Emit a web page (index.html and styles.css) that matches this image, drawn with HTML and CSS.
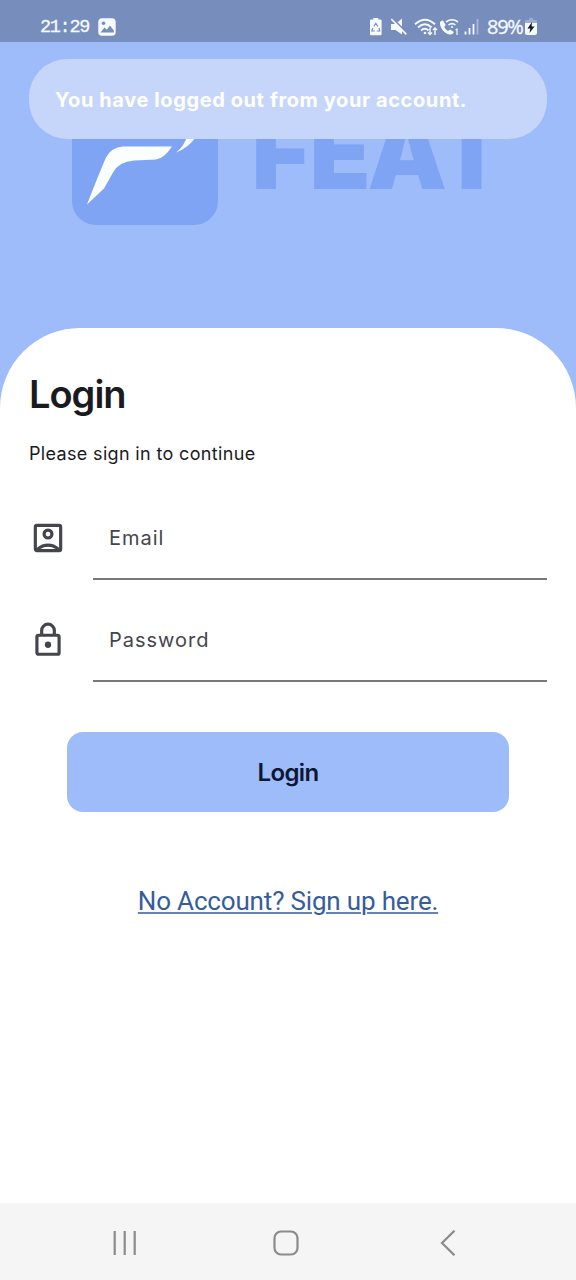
FILE: index.html
```html
<!DOCTYPE html>
<html lang="en">
<head>
<meta charset="utf-8">
<title>Login</title>
<link rel="stylesheet" href="styles.css">
</head>
<body>
<div class="screen">
  <div class="status">
    <span class="time">21:29</span>
    <svg class="gallery" width="18" height="18" viewBox="0 0 18 18"><rect x=".3" y=".3" width="17.4" height="17.4" rx="3.8" fill="#f5faff"/><circle cx="5.5" cy="5.3" r="1.8" fill="#778dbc"/><path d="M2.5 14.500 6.500 9.500l2.300 2.200L12 7.500l3.800 5v2z" fill="#778dbc"/></svg>
    <svg class="indicators" width="115" height="20" viewBox="0 0 115 20" fill="none" stroke="#f5faff">
      <path d="M2 2.500h2.300V1h5v1.500h2.300q1 0 1 1v13.700q0 1-1 1H2q-1 0-1-1V3.500q0-1 1-1z" fill="#f5faff" stroke="none"/>
      <path d="m4.800 9.500 2-3.200 2 3.200M10 11l.8 3H7.800M5.800 14H2.800l1-3" stroke="#778dbc" stroke-width="1.100"/>
      <path d="M22 7h4.500L33 1.500v16L26.500 13H22z" fill="#f5faff" stroke="none"/>
      <path d="m23.500 1.500 15 15" stroke="#778dbc" stroke-width="1.800"/><path d="m22.300 2 15 15.300" stroke-width="1.700"/>
      <path d="M46 7.300Q56-2 66 7.300M49 10.500q7-6.300 13.500 0M52 13.500q4-3.500 7.500 0" stroke-width="1.900"/>
      <circle cx="56" cy="16" r="1.300" fill="#f5faff" stroke="none"/>
      <path d="M61 11v6.500m-2-2 2 2 2-2M66 18v-7m-2 2 2-2 2 2" stroke-width="1.400"/>
      <path d="M74 3.500c-2 0-3.500 1.500-3 4 1 5 5 9 9.500 10 2.500.5 4-1 4.300-2.500L81 12.500l-2 1.500q-2.500-1.200-3.800-4l1.500-2z" fill="#f5faff" stroke="none"/>
      <path d="M77 5q6-4.500 12 0M79.500 8q3.500-2.800 7 0" stroke-width="1.600"/><circle cx="83" cy="10" r="1.100" fill="#f5faff" stroke="none"/>
      <path d="m86.500 13 1.500-1v6" stroke-width="1.200"/>
      <path d="M96.500 14.500v3M100.500 11v6.500M104.500 7v10.500" stroke-width="1.800"/><path d="M108.500 2v15.500" stroke-width="1.800" opacity=".4"/>
    </svg>
    <span class="percent">89%</span>
    <svg class="battery" width="12" height="18" viewBox="0 0 12 18"><path d="M4 0h4v2h3q1 0 1 1v3H0V3q0-1 1-1h3z" fill="#9bacd0"/><path d="M0 5h12v10q0 2-2 2H2q-2 0-2-2z" fill="#f5faff"/><path d="M7 4 2.500 10.500H5.300L4.500 15 9.500 8.500H6.600z" fill="#15191f"/></svg>
  </div>
  <div class="hero">
    <svg class="logo" width="440" height="146" viewBox="72 78.500 440 146">
      <rect x="72" y="78.500" width="146" height="146" rx="24" fill="#7fa4f4"/>
      <path d="M87 204C94 186 100 171 106 157Q111 147 123 146H172Q164 158 156 159L134 160Q119 161 113 172L104 188Z" fill="#fafffe"/>
      <path d="M176 152Q184 146 187 136H196Q189 147 176 152Z" fill="#fafffe"/>
      <text class="brand" y="188"><tspan x="251.500">F</tspan><tspan x="309.500">E</tspan><tspan x="367.500">A</tspan><tspan x="437.300">T</tspan></text>
    </svg>
    <div class="toast">You have logged out from your account.</div>
  </div>
  <main class="sheet">
    <h1 class="title">Login</h1>
    <p class="subtitle">Please sign in to continue</p>
    <div class="row">
      <svg class="icon" width="38" height="38" viewBox="0 0 24 24" fill="#45464d"><path d="M19 3H5a2 2 0 0 0-2 2v14c0 1.100.9 2 2 2h14a2 2 0 0 0 2-2V5a2 2 0 0 0-2-2zM7.200 19a8.300 8.300 0 0 1 9.600 0zM19 18.200a10.400 10.400 0 0 0-14 0V5h14zM12 13a3.500 3.500 0 1 0 0-7 3.500 3.500 0 0 0 0 7zm0-5a1.500 1.500 0 1 1 0 3 1.500 1.500 0 0 1 0-3z"/></svg>
      <label class="field">Email</label>
    </div>
    <div class="row">
      <svg class="icon" width="38" height="38" viewBox="0 0 24 24" fill="#45464d"><path d="M18 8h-1V6A5 5 0 0 0 7 6v2H6a2 2 0 0 0-2 2v10c0 1.100.9 2 2 2h12a2 2 0 0 0 2-2V10a2 2 0 0 0-2-2zM9 6a3 3 0 0 1 6 0v2H9zm9 14H6V10h12zm-6-3a2 2 0 1 0 0-4 2 2 0 0 0 0 4z"/></svg>
      <label class="field">Password</label>
    </div>
    <button class="submit">Login</button>
    <a class="signup">No Account? Sign up here.</a>
  </main>
  <nav class="nav">
    <svg width="24" height="26" viewBox="0 0 24 26" fill="none" stroke="#8b8b8b" stroke-width="2.200"><path d="M1.700 1v24M11.700 1v24M21.700 1v24"/></svg>
    <svg width="26" height="26" viewBox="0 0 26 26" fill="none" stroke="#8b8b8b" stroke-width="2.200"><rect x="1.500" y="1.500" width="23" height="23" rx="6.500"/></svg>
    <svg class="back" width="16" height="26" viewBox="0 0 16 26" fill="none" stroke="#8b8b8b" stroke-width="2.200"><path d="M14.500.7 2 13l12.500 12.300"/></svg>
  </nav>
</div>
</body>
</html>
```
FILE: styles.css
```css
* { box-sizing: border-box; }
body { margin: 0; font-family: Inter, sans-serif; }
.screen { width: 576px; height: 1280px; display: flex; flex-direction: column; background: #9ebbfa; }
.status { height: 42px; flex: none; background: #778dbc; display: flex; align-items: center; padding: 11px 39px 0 40px; color: #f5faff; font-size: 18px; }
.time { width: 58px; padding-top: 2px; font-family: "Liberation Mono", monospace; font-size: 18.500px; letter-spacing: -1.300px; -webkit-text-stroke: .3px #f5faff; }
.indicators { margin-left: 253px; }
.percent { margin-left: 3px; width: 37px; font-family: "Open Sans", sans-serif; font-size: 20px; letter-spacing: -1.300px; line-height: 20px; -webkit-text-stroke: .3px #f5faff; }
.battery { margin-left: 1px; }
.hero { position: relative; height: 286px; flex: none; padding: 36.500px 0 0 72px; }
.logo { display: block; }
.brand { font: 900 100px Inter, sans-serif; fill: #7fa4f4; }
.toast { position: absolute; left: 29px; top: 17px; width: 518px; height: 80px; border-radius: 38px; background: #c6d6fa; color: #fff; padding-left: 26px; font-size: 20px; font-weight: 700; line-height: 83px; white-space: nowrap; letter-spacing: .6px; }
.sheet { flex: 1; background: #fff; border-radius: 80px 80px 0 0; padding: 43px 29px 0; display: flex; flex-direction: column; }
.title { margin: 0; font-size: 38px; line-height: 46px; font-weight: 600; letter-spacing: -1px; color: #1b1b1f; }
.subtitle { margin: 25px 0 38px; font-size: 18px; line-height: 24px; letter-spacing: .34px; color: #1b1b1f; }
.row { height: 76px; margin-bottom: 26px; display: flex; align-items: center; }
.icon { margin: 0 26px 9px 0; flex: none; }
.field { flex: 1; height: 76px; padding: 0 16px; border-bottom: 2px solid #77777c; font-size: 20px; line-height: 68px; letter-spacing: 1px; color: #45464d; }
.submit { margin: 24px 38px 0; height: 80px; border: 0; border-radius: 16px; background: #9ebbfa; font: 600 24px Inter, sans-serif; letter-spacing: -.6px; color: #0c1635; }
.signup { align-self: center; margin-top: 73px; font: 26px/32px Roboto, sans-serif; letter-spacing: -.17px; color: #365d9b; text-decoration: underline; text-decoration-color: #6583b3; text-decoration-thickness: 2px; text-underline-offset: 2px; white-space: nowrap; }
.nav { height: 77px; flex: none; background: #f5f5f5; display: flex; align-items: center; padding: 3px 0 0 113px; gap: 136px; }
.back { margin-left: 5px; }
```
